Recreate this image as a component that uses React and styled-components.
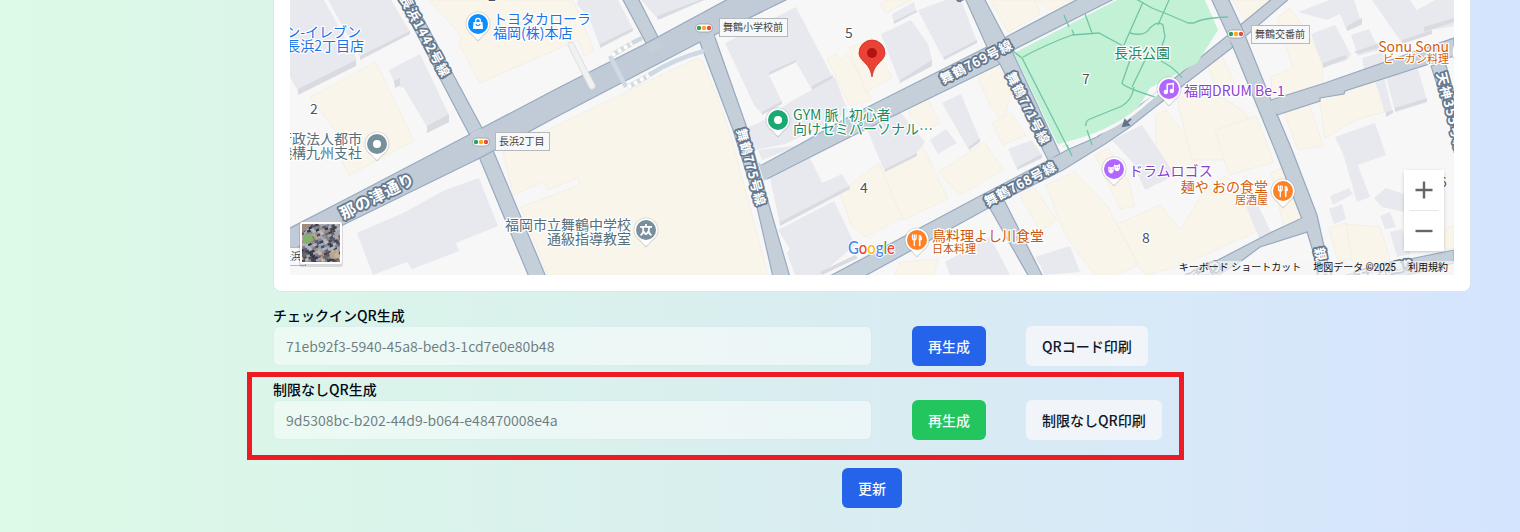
import React from "react";
import styled, { createGlobalStyle } from "styled-components";

const GlobalStyle = createGlobalStyle`
  * { box-sizing: border-box; }
  body {
    margin: 0;
    font-family: "Noto Sans CJK JP", sans-serif;
    color: #020817;
  }
`;

const Page = styled.div`
  height: 532px;
  overflow: hidden;
  padding: 0 50px 0 273px;
  background: linear-gradient(to right, #dcfae6, #d9eeef 50%, #d8e9f8 76%, #d5e4fe);
`;

const Form = styled.form`
  position: relative;
  display: flex;
  flex-direction: column;
  height: 532px;
`;

const MapCard = styled.section`
  flex: none;
  height: 292px;
  margin-right: -1px;
  padding: 0 16px 17px;
  background: #fff;
  border: 1px solid #d9e5ec;
  border-top: 0;
  border-radius: 0 0 8px 8px;
`;

const MapFrame = styled.div`
  position: relative;
  width: 1164px;
  height: 275px;
  overflow: hidden;
  background: #f7f7f7;
`;

const MapCanvas = styled.svg`
  display: block;
`;

const ZoomControl = styled.div`
  position: absolute;
  right: 10px;
  top: 170px;
  display: flex;
  flex-direction: column;
  align-items: center;
  width: 40px;
  height: 81px;
  background: #fff;
  box-shadow: 0 1px 4px -1px rgba(0, 0, 0, 0.3);
`;

const ZoomButton = styled.button`
  display: grid;
  place-items: center;
  width: 40px;
  height: 40px;
  padding: 0;
  border: 0;
  background: none;
`;

const ZoomDivider = styled.span`
  width: 30px;
  height: 1px;
  background: #e6e6e6;
`;

const Attribution = styled.div`
  position: absolute;
  right: 0;
  bottom: 0;
  display: flex;
  height: 14px;
  font-family: Roboto, "Noto Sans CJK JP", sans-serif;
  font-size: 10px;
  line-height: 14px;
  color: #111;
  white-space: nowrap;
`;

const Credit = styled.span`
  padding: 0 6px;
  background: rgba(245, 245, 245, 0.72);
`;

const Field = styled.div`
  display: grid;
  grid-template-columns: 599px 74px auto;
  column-gap: 40px;
  align-items: center;
  justify-content: start;
  height: 74px;
  padding-top: 14px;
`;

const FieldLabel = styled.label`
  grid-column: 1 / -1;
  height: 20px;
  font-size: 14px;
  font-weight: 500;
  line-height: 18px;
`;

const CodeInput = styled.input`
  width: 599px;
  height: 40px;
  padding: 0 12px;
  border: 1px solid rgba(214, 230, 240, 0.6);
  border-radius: 6px;
  background: #fff;
  background-clip: padding-box;
  opacity: 0.5;
  color: #020817;
  font: 400 14px/20px "Noto Sans CJK JP", sans-serif;
`;

const tones = {
  blue: ["#2563eb", "#f8fafc"],
  green: ["#22c55e", "#f8fafc"],
  plain: ["#f1f5f9", "#0f172a"],
};

const Button = styled.button`
  justify-self: start;
  height: 40px;
  padding: 0 16px;
  border: 0;
  border-radius: 6px;
  background: ${(p) => tones[p.$tone][0]};
  color: ${(p) => tones[p.$tone][1]};
  font: 500 14px/20px "Noto Sans CJK JP", sans-serif;
  white-space: nowrap;
`;

const SubmitRow = styled.div`
  display: flex;
  justify-content: center;
  padding-top: 28px;
  padding-left: 1px;
`;

const Highlight = styled.div`
  position: absolute;
  left: -26px;
  top: 372px;
  width: 937px;
  height: 88px;
  border: 5px solid #ed1c24;
  pointer-events: none;
`;

const PoiText = styled.text`
  font: 400 ${(p) => p.$size || 14}px "Noto Sans CJK JP", sans-serif;
  fill: ${(p) => p.$color};
  stroke: #fff;
  stroke-width: 2.5px;
  stroke-linejoin: round;
  paint-order: stroke;
`;

const RoadText = styled.text`
  font: 700 ${(p) => p.$size || 13}px "Noto Sans CJK JP", sans-serif;
  fill: #fff;
  stroke: #64788f;
  stroke-width: 3.5px;
  stroke-linejoin: round;
  paint-order: stroke;
`;

const BadgeText = styled.text`
  font: 400 10px "Noto Sans CJK JP", sans-serif;
  fill: #444;
`;

const LogoText = styled.text`
  font: 500 17px Lato, sans-serif;
  stroke: #fff;
  stroke-width: 2px;
  paint-order: stroke;
`;

const cream = [
  "310,97 376,62 414,141 349,175 342,162 352,153",
  "429,0 573,0 594,51 584,56 578,40 480,83 459,45 462,37 457,31",
  "503,152 510,147 560,124 697,58 703,62 720,104 732,140 768,275 548,275 521,207 580,185 578,178 548,190 543,182 513,195",
  "827,59 836,54 840,60 848,54 872,100 850,106",
  "849,48 872,38 892,78 866,92",
  "880,4 887,0 911,0 886,13",
  "990,0 1036,0 1040,14 1008,32",
  "1038,0 1085,0 1048,10",
  "973,66 997,64 1012,90 1003,122 989,104",
  "910,100 927,97 940,123 925,131 910,115",
  "992,123 1011,113 1026,135 1003,145",
  "845,188 879,163 902,212 902,218 865,237 851,225 840,193",
  "880,166 922,145 948,199 903,220",
  "938,172 955,162 984,142 1003,170 960,195",
  "1020,195 1034,188 1057,220 1040,231",
  "1046,185 1075,172 1108,207 1138,265 1115,275 1095,275 1072,245 1061,225",
  "1095,155 1108,148 1128,180 1135,206 1120,209",
  "1117,224 1160,205 1180,230 1205,190 1225,176 1248,201 1260,230 1180,266 1146,275 1138,265",
  "900,262 938,259 934,275 895,275",
  "1156,115 1166,110 1203,157 1188,185 1156,157",
  "1177,100 1205,85 1244,112 1262,145 1249,160 1192,160",
  "1206,62 1222,56 1235,85 1218,94",
  "1215,130 1256,116 1274,162 1229,175",
  "1277,18 1290,8 1306,30 1322,60 1323,84 1272,99 1271,77 1293,68",
  "1284,113 1309,104 1323,146 1298,150",
  "1319,98 1344,91 1383,75 1384,112 1356,120 1325,138",
  "1271,173 1289,165 1302,219 1284,228",
  "1233,0 1282,0 1245,20",
  "1329,228 1346,222 1355,257 1338,262",
  "1346,224 1380,227 1390,260 1353,268",
  "1444,230 1454,225 1454,248 1444,250",
];

const gray = [
  "290,0 324,0 357,60 298,91 290,77",
  "328,0 391,0 410,32 360,57",
  "389,70 420,54 449,115 449,122 427,133 427,127 404,88 396,86",
  "357,233 403,213 445,190 479,178 498,226 456,243 459,251 412,269 407,262 373,275",
  "578,0 618,0 633,29 600,47 590,20 577,4",
  "641,0 705,0 658,19",
  "725,43 796,7 833,78 812,90 796,62 769,75 782,102 762,114 754,105",
  "790,102 835,77 848,112 820,128 785,144 751,151 747,128 762,121",
  "758,150 800,145 762,160",
  "770,178 810,158 822,183 842,174 850,188 780,225",
  "778,230 834,201 855,245 820,275 795,275 787,253 790,249",
  "892,14 914,2 916,11 894,23",
  "881,34 911,20 928,44 932,61 900,83",
  "918,10 946,0 961,0 977,42 944,60",
  "942,103 961,94 980,140 969,150",
  "865,125 900,112 925,142 915,155 885,172",
  "930,140 946,129 957,143 938,154",
  "1008,149 1032,140 1042,155 1017,169",
  "945,262 990,237 1010,275 950,275",
  "1035,257 1070,246 1080,272 1044,275 1040,265",
  "1112,140 1142,125 1175,175 1145,190 1133,163",
  "1298,12 1330,0 1354,0 1362,25 1347,31 1340,14 1327,20",
  "1311,34 1335,25 1351,55 1345,61 1323,67",
  "1351,35 1369,29 1379,50 1358,56",
  "1362,58 1382,52 1388,63 1364,69",
  "1372,0 1410,0 1432,33 1402,43",
  "1417,10 1435,0 1454,0 1454,26 1424,31",
  "1375,81 1384,77 1393,113 1386,116",
  "1386,77 1418,69 1427,101 1395,111",
  "1335,137 1375,123 1386,155 1350,168",
  "1342,150 1350,145 1370,197 1357,202",
  "1329,209 1342,204 1346,219 1334,224",
  "1330,196 1349,188 1353,194 1333,205",
  "1374,198 1386,188 1404,194 1415,198 1404,212 1382,207",
  "1380,216 1390,212 1396,227 1385,229",
  "1390,232 1402,229 1410,254 1397,257",
  "1237,185 1253,195 1271,232 1260,240",
];

const shade = [
  "298,89 356,60 356,66 298,95",
  "360,56 410,31 410,34 360,60",
  "394,81 400,78 400,85 395,88",
  "427,126 449,114 449,122 427,133",
  "600,44 633,28 633,31 600,48",
  "657,16 700,0 704,0 658,20",
  "812,86 833,75 833,78 812,90",
  "769,72 796,60 796,62 769,75",
  "762,112 782,101 782,104 762,115",
  "780,222 849,186 850,189 780,226",
  "820,272 855,255 858,258 822,275",
  "894,21 917,10 917,12 894,24",
  "900,80 932,60 932,66 900,83",
  "944,57 977,40 977,43 944,60",
  "969,147 980,138 980,142 969,150",
  "885,169 917,153 917,156 885,172",
  "1017,167 1042,154 1042,158 1017,170",
  "1323,63 1345,55 1348,58 1323,68",
  "1386,112 1393,110 1393,113 1386,117",
  "1395,108 1427,98 1427,102 1395,112",
  "1402,40 1432,30 1432,34 1402,44",
  "1354,52 1379,43 1379,48 1358,54",
  "1424,27 1454,18 1454,22 1424,32",
  "1347,26 1362,18 1362,24 1347,31",
];

const roads = [
  "398,-2 412,-2 482,128 469,134",
  "477,152 492,148 546,277 529,277",
  "622,-2 638,-2 659,39 647,45",
  "699,40 713,32 747,128 769,205 790,277 773,277 757,207 733,130",
  "760,166 795,147 852,115 987,47 1080,-2 1116,-2 1013,50 1000,64 850,137 767,179",
  "965,-2 984,-2 1013,53 1062,158 1049,162 1000,64 987,47",
  "828,277 860,260 978,197 1049,160 1067,150 1097,137 1150,98 1227,36 1273,-2 1290,-2 1233,47 1150,111 1130,127 1105,144 1063,170 1003,200 863,277",
  "988,205 1003,198 1043,277 1029,277",
  "1211,-2 1228,-2 1242,28 1271,100 1292,150 1317,215 1331,277 1321,277 1307,232 1275,150 1233,47 1227,33",
  "1271,100 1325,83 1454,38 1454,56 1345,91 1344,94 1320,98 1320,101 1277,115",
  "1302,218 1307,232 1260,247 1240,262 1215,277 1190,277 1218,260 1270,233",
  "1431,66 1445,62 1456,100 1456,148 1450,125",
  "1340,277 1360,271 1405,260 1454,250 1454,263 1400,277",
];

const arterial =
  "288,229 350,197 482,128 560,87 643,45 730,-2 790,-2 700,42 560,115 480,158 347,223 288,252";

const Polys = ({ list, ...rest }) => (
  <g {...rest}>
    {list.map((p) => (
      <polygon key={p} points={p} />
    ))}
  </g>
);

const Pin = ({ x, y, color, children }) => (
  <g transform={`translate(${x} ${y})`}>
    <path
      d="M0 17.5C-2 16-4 12.5-7 10.4A12.5 12.5 0 1 1 7 10.4C4 12.5 2 16 0 17.5Z"
      fill="#8a94a0"
      opacity="0.35"
    />
    <path
      d="M0 16C-2 14.5-4 11.5-6.5 9.5A11.6 11.6 0 1 1 6.5 9.5C4 11.5 2 14.5 0 16Z"
      fill="#fff"
    />
    <circle r="10" fill={color} />
    {children}
  </g>
);

const Dot = () => <circle r="4" fill="#fff" />;
const Fork = () => (
  <g stroke="#fff" strokeWidth="1.3" fill="none" strokeLinecap="round">
    <path d="M-4.5-5V-2Q-4.5 0-2.7 0T-.9-2V-5M-2.7-5V5.5" />
    <path d="M2.7 5.5V-1" strokeWidth="1.6" />
    <path d="M2.3-5Q4.6-5 4.6-1.5V0H2.3Z" fill="#fff" strokeWidth=".5" />
  </g>
);
const Bag = () => (
  <g>
    <path d="M-4.5-2H4.5L5 5H-5Z" fill="#fff" />
    <path d="M-2.3-1V-3.5Q-2.3-5.5 0-5.5T2.3-3.5V-1" fill="none" stroke="#fff" strokeWidth="1.3" />
    <path d="M-2.2 0Q0 3.5 2.2 0" fill="none" stroke="#0a8fff" strokeWidth="1.2" />
  </g>
);
const School = () => (
  <path
    d="M0-6V-3.5M-6-3.2H6M-3.2-2.5Q-1.5 3-5.5 5.2M3.2-2.5Q1.5 3 5.5 5.2M-3 .5Q-1 4 0 4T3 .5"
    stroke="#fff"
    strokeWidth="1.8"
    fill="none"
  />
);
const Music = () => (
  <g fill="#fff">
    <circle cx="-3.2" cy="3" r="2.2" />
    <circle cx="2.8" cy="2" r="2.2" />
    <path d="M-1.8 3V-4.5L4.3-5.5V2" fill="none" stroke="#fff" strokeWidth="1.5" />
  </g>
);
const Masks = () => (
  <g>
    <path d="M0-4.5L2-3.8 4-4 6-5.2V-1Q5.5 2 3 2.2 0 1.5 0-1Z" fill="#fff" />
    <path d="M-6-2.8L-4-2 -2-2 0-3V1.5Q-.5 4.5-3 4.7-6 4-6 1Z" fill="#fff" stroke="#b266ff" strokeWidth=".5" />
    <path d="M-4.7 .2H-3.7M-2.3 .2H-1.3M1.8-1.7H2.6M4-1.7H4.8" stroke="#b266ff" />
  </g>
);

const Signal = ({ x, y }) => (
  <g transform={`translate(${x} ${y})`}>
    <rect x="-8.5" y="-4" width="17" height="8" rx="4" fill="#fff" stroke="#9b9b9b" strokeWidth=".8" />
    <circle cx="-5" r="2.2" fill="#2e9e63" />
    <circle r="2.2" fill="#fbaa19" />
    <circle cx="5" r="2.2" fill="#ea4a3d" />
  </g>
);

const Badge = ({ x, y, w, text }) => (
  <g>
    <rect x={x + 0.5} y={y + 0.5} width={w} height="18" fill="#f7f8fa" stroke="#b5b9be" />
    <BadgeText x={x + 4} y={y + 13}>{text}</BadgeText>
  </g>
);

const RoadName = ({ x, y, angle, size, length, children }) => (
  <RoadText
    $size={size}
    textAnchor="middle"
    textLength={length}
    transform={`translate(${x} ${y}) rotate(${angle})`}
    dy=".37em"
  >
    {children}
  </RoadText>
);

const pois = [
  [493, 24, "#1a73e8", "トヨタカローラ"],
  [493, 38, "#1a73e8", "福岡(株)本店"],
  [793, 120, "#178a5f", "GYM 脈 | 初心者"],
  [793, 134, "#178a5f", "向けセミパーソナル…"],
  [1114, 58, "#25885f", "長浜公園"],
  [1184, 96, "#8a3fd1", "福岡DRUM Be-1"],
  [1129, 176, "#8a3fd1", "ドラムロゴス"],
  [932, 241, "#c9580c", "鳥料理よし川食堂"],
  [932, 253, "#c9580c", "日本料理", 11],
];
const endPois = [
  [361, 37, "#1a73e8", "セブン-イレブン"],
  [364, 51, "#1a73e8", "福岡長浜2丁目店"],
  [362, 144, "#546e7a", "独立行政法人都市"],
  [362, 158, "#546e7a", "再生機構九州支社"],
  [631, 230, "#546e7a", "福岡市立舞鶴中学校"],
  [631, 244, "#546e7a", "通級指導教室"],
  [1268, 192, "#d2600f", "麺や おの食堂"],
  [1268, 204, "#d2600f", "居酒屋", 11],
  [1449, 52, "#d2600f", "Sonu Sonu"],
  [1449, 63, "#d2600f", "ビーガン料理", 11],
];
const blocks = [
  [314, 114, "2"],
  [849, 38, "5"],
  [1086, 84, "7"],
  [864, 193, "4"],
  [1146, 243, "8"],
  [492, 1, "2"],
  [1443, 187, "6"],
];

const groundTones = [
  "#3d4052", "#9ca5b8", "#4b4d59", "#b2a496", "#7d8495", "#343749",
  "#a08a7c", "#c4bab4", "#565b73", "#8b7c78", "#aeb5c4", "#6d6660",
];

const SatelliteTiles = () => (
  <g clipPath="url(#satellite)">
    <g transform="rotate(-24 321 243)">
      {Array.from({ length: 15 * 22 }, (_, i) => {
        const row = Math.floor(i / 15);
        const col = i % 15;
        const pick = (row * 7 + col * 5 + ((row * col * 13 + col * col * 3) % 17)) % groundTones.length;
        return (
          <rect
            key={i}
            x={294 + col * 3.6 + (row % 3)}
            y={216 + row * 2.5}
            width="4"
            height="2.8"
            fill={groundTones[pick]}
          />
        );
      })}
    </g>
    <path d="M303 236L310 233 314 239 309 244 303 243Z" fill="#83b06f" />
    <path d="M329 253L338 248 340 258 331 259Z" fill="#cdb79b" opacity=".8" />
    <path d="M302 224H313L302 233Z" fill="#a08a7c" />
  </g>
);

const MapDrawing = () => (
  <MapCanvas width="1164" height="275" viewBox="290 0 1164 275">
    <clipPath id="satellite">
      <rect x="302" y="224" width="38" height="38" />
    </clipPath>
    <Polys list={cream} fill="#f9f5eb" stroke="#f2ecdf" strokeWidth=".7" />
    <Polys list={gray} fill="#e8e9ee" />
    <Polys list={shade} fill="#d9dbe1" />
    <Polys list={roads} fill="#c5cfda" stroke="#98a9be" strokeWidth="1.2" />
    <polygon points={arterial} fill="#c1cbd8" stroke="#98a9be" strokeWidth="1.2" />
    <g fill="#c4ced9">
      <polygon points="470,133 481,128 491,149 480,156" />
      <polygon points="647,45 658,39 663,47 650,54" />
      <polygon points="696,40 713,33 715,38 702,42" />
      <polygon points="758,162 762,165 768,178 764,181" />
      <polygon points="985,49 1003,40 1013,51 1001,63" />
      <polygon points="1049,159 1061,155 1069,155 1066,165 1052,171" />
      <polygon points="986,198 1000,192 1003,199 990,206" />
      <polygon points="1227,37 1241,28 1246,36 1234,46" />
      <polygon points="1270,101 1276,99 1282,112 1276,114" />
      <polygon points="1299,220 1306,216 1312,230 1304,232" />
    </g>
    <polygon
      points="1014,53 1113,2 1122,-2 1204,-2 1218,30 1197,63 1150,88 1140,105 1128,118 1100,133 1063,147 1057,143"
      fill="#c3f1d5"
    />
    <path d="M1060 145Q1110 134 1140 108T1160 94" fill="none" stroke="#f7f7f7" strokeWidth="3" />
    <g fill="none" stroke="#70c5a7" strokeWidth="1.3">
      <path d="M1013 51L1022 58L1069 150" />
      <path d="M1023 57Q1045 45 1072 35L1099 33L1123 46" />
      <path d="M1064 15L1069 27M1072 30L1074 35M1085 14L1092 33" />
      <path d="M1143 2L1124 45M1136 -1L1152 8Q1170 15 1188 23L1194 23Q1202 18 1228 17M1169 0L1158 25" />
      <path d="M1130 33Q1145 37 1150 28Q1158 20 1163 25L1165 37L1161 49" />
      <path d="M1130 60L1122 83Q1123 87 1155 97M1146 58L1132 87M1134 87Q1132 100 1122 106L1090 119Q1085 121 1086 126M1087 130L1092 145M1161 61Q1175 68 1182 78" />
      <path d="M1067 145L1072 156" stroke="#62cc9e" />
    </g>
    <g fill="none" strokeLinecap="round">
      <path d="M571 45L592 86" stroke="#dedfe1" strokeWidth="7" />
      <path d="M571 45L592 86" stroke="#f1f1f2" strokeWidth="5" />
      <path d="M610 56L626 87M649 75Q674 59 704 51M632 43L642 38" stroke="#cfd9e3" strokeWidth="4.5" strokeLinecap="butt" />
      <path d="M612 55L631 44M628 87L648 76" stroke="#d8dbdf" strokeWidth="5" strokeLinecap="butt" />
      <path d="M612 55L631 44M628 87L648 76" stroke="#fff" strokeWidth="4" strokeDasharray="3.5 3.5" strokeLinecap="butt" />
    </g>
    <path d="M1131 119L1125 124M1123 126L1125 120L1129 125Z" stroke="#61748a" strokeWidth="1.8" fill="#61748a" />

    <RoadName x={425} y={36} angle={62} length={90}>長浜1442号線</RoadName>
    <RoadName x={377} y={196} angle={-27} size={16} length={81}>那の津通り</RoadName>
    <RoadName x={751} y={167} angle={75} length={79}>舞鶴775号線</RoadName>
    <RoadName x={976} y={62} angle={-27} length={79}>舞鶴769号線</RoadName>
    <RoadName x={1028} y={108} angle={63} length={79}>舞鶴771号線</RoadName>
    <RoadName x={1020} y={184} angle={-28} length={79}>舞鶴768号線</RoadName>
    <RoadName x={1451} y={112} angle={76} length={82}>天神355号線</RoadName>
    <RoadName x={1327} y={286} angle={78} length={78}>親富孝通り</RoadName>
    <RoadName x={1199} y={275} angle={-27} size={12}>長浜通り</RoadName>
    <RoadName x={1385} y={270} angle={-14} size={12}>天神北通り</RoadName>
    <RoadName x={958} y={-13} angle={65}>号線</RoadName>

    <Badge x={719} y={18} w={68} text="舞鶴小学校前" />
    <Badge x={495} y={132} w={54} text="長浜2丁目" />
    <Badge x={1251} y={25} w={58} text="舞鶴交番前" />
    <Badge x={277} y={247} w={28} text="長浜" />
    <Signal x={481} y={142} />
    <Signal x={704} y={28} />
    <Signal x={1236} y={34} />

    {blocks.map(([x, y, t]) => (
      <PoiText key={`${x}-${y}`} x={x} y={y} $color="#4d535b" textAnchor="middle">{t}</PoiText>
    ))}
    {pois.map(([x, y, c, t, s]) => (
      <PoiText key={t} x={x} y={y} $color={c} $size={s}>{t}</PoiText>
    ))}
    {endPois.map(([x, y, c, t, s]) => (
      <PoiText key={t} x={x} y={y} $color={c} $size={s} textAnchor="end">{t}</PoiText>
    ))}

    <Pin x={478} y={24} color="#0a8fff"><Bag /></Pin>
    <Pin x={377} y={144} color="#78909c"><Dot /></Pin>
    <Pin x={778} y={120} color="#1aa873"><Dot /></Pin>
    <Pin x={646} y={230} color="#78909c"><School /></Pin>
    <Pin x={917} y={240} color="#ff8126"><Fork /></Pin>
    <Pin x={1283} y={191} color="#ff8126"><Fork /></Pin>
    <Pin x={1169} y={89} color="#b266ff"><Music /></Pin>
    <Pin x={1114} y={169} color="#b266ff"><Masks /></Pin>
    <circle cx="1464" cy="52" r="12" fill="#fff" stroke="#ccd0d6" />

    <path
      d="M872 77C870.500 68 867 65 863.500 61.500C860.500 58.500 859 56 859 53A13 13 0 0 1 885 53C885 56 883.500 58.500 880.500 61.500C877 65 873.500 68 872 77Z"
      fill="#ea4335"
      stroke="#c5221f"
      strokeWidth=".7"
    />
    <circle cx="872" cy="53" r="5" fill="#b31412" />

    <LogoText x="848" y="254" textLength="47" lengthAdjust="spacingAndGlyphs">
      <tspan fill="#4285f4">G</tspan>
      <tspan fill="#ea4335">o</tspan>
      <tspan fill="#fbbc04">o</tspan>
      <tspan fill="#4285f4">g</tspan>
      <tspan fill="#34a853">l</tspan>
      <tspan fill="#ea4335">e</tspan>
    </LogoText>

    <g>
      <rect x="299" y="222" width="44" height="45" rx="3" fill="#000" opacity=".12" />
      <rect x="300" y="222" width="42" height="42" rx="2" fill="#fff" />
      <SatelliteTiles />
    </g>
  </MapCanvas>
);

export default function App() {
  return (
    <>
      <GlobalStyle />
      <Page>
        <Form>
          <MapCard>
            <MapFrame>
              <MapDrawing />
              <ZoomControl>
                <ZoomButton type="button" aria-label="zoom in">
                  <svg width="18" height="18" viewBox="0 0 18 18">
                    <path d="M9 .5V17.5M.5 9H17.5" stroke="#666" strokeWidth="2.4" />
                  </svg>
                </ZoomButton>
                <ZoomDivider />
                <ZoomButton type="button" aria-label="zoom out">
                  <svg width="18" height="18" viewBox="0 0 18 18">
                    <path d="M.5 9H17.5" stroke="#666" strokeWidth="2.4" />
                  </svg>
                </ZoomButton>
              </ZoomControl>
              <Attribution>
                <Credit>キーボード ショートカット</Credit>
                <Credit>地図データ ©2025</Credit>
                <Credit>利用規約</Credit>
              </Attribution>
            </MapFrame>
          </MapCard>
          <Field>
            <FieldLabel>チェックインQR生成</FieldLabel>
            <CodeInput disabled value="71eb92f3-5940-45a8-bed3-1cd7e0e80b48" />
            <Button type="button" $tone="blue">再生成</Button>
            <Button type="button" $tone="plain">QRコード印刷</Button>
          </Field>
          <Field>
            <FieldLabel>制限なしQR生成</FieldLabel>
            <CodeInput disabled value="9d5308bc-b202-44d9-b064-e48470008e4a" />
            <Button type="button" $tone="green">再生成</Button>
            <Button type="button" $tone="plain">制限なしQR印刷</Button>
          </Field>
          <SubmitRow>
            <Button type="button" $tone="blue">更新</Button>
          </SubmitRow>
          <Highlight />
        </Form>
      </Page>
    </>
  );
}
